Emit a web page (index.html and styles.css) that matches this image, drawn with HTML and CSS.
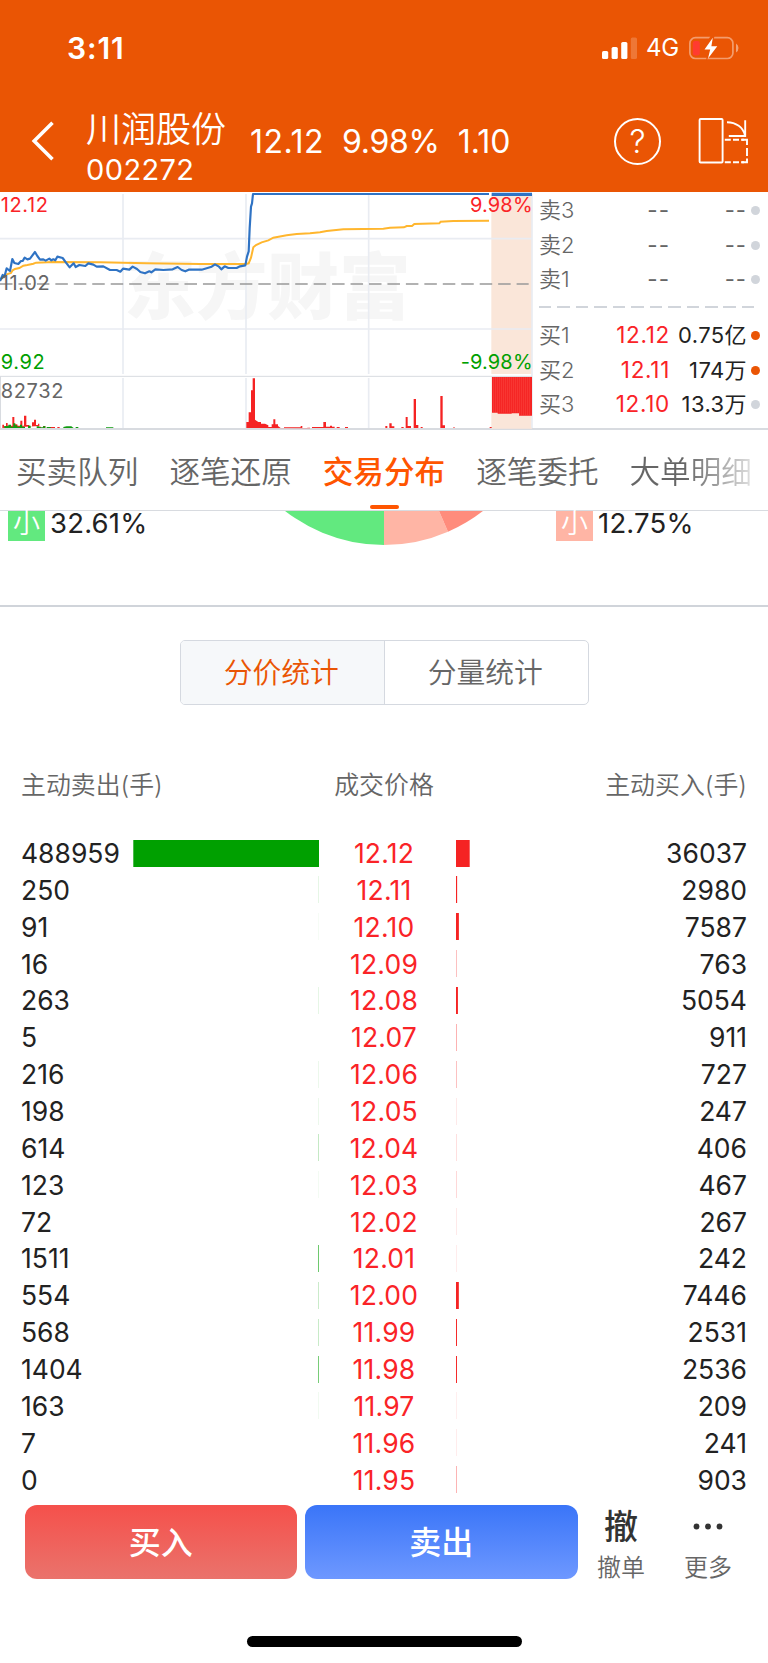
FILE: index.html
```html
<!DOCTYPE html>
<html lang="zh-CN">
<head>
<meta charset="utf-8">
<title>川润股份 002272</title>
<link rel="stylesheet" href="styles.css">
</head>
<body>
<div class="app">
  <header class="header">
    <div class="status">
      <span class="time">3:11</span>
      <svg class="signal" width="36" height="24" viewBox="0 0 36 24" fill="#fff"><rect x="0" y="15" width="6.2" height="8" rx="1.6"/><rect x="9.6" y="11" width="6.2" height="12" rx="1.6"/><rect x="19.2" y="6" width="6.2" height="17" rx="1.6"/><rect x="28.8" y="1.500" width="6.2" height="21.500" rx="1.600" opacity=".2"/></svg>
      <span class="net">4G</span>
      <svg class="battery" width="51" height="26" viewBox="0 0 51 26"><rect x="1.900" y="2.700" width="43" height="20.800" rx="5.500" fill="none" stroke="#fff" stroke-opacity=".42" stroke-width="1.700"/><path d="M48 8.500q2.500 1.500 2.500 4.500t-2.500 4.500z" fill="#fff" fill-opacity=".45"/><rect x="4.800" y="6" width="7" height="14.500" rx="2.200" fill="#ff3b30"/><path d="M22.500 1L14.500 15H20L18 25.500L30 11H24L26.500 1z" fill="#ea5504"/><path d="M24.800 2.800L16.500 14.500H22.200L20 23.600L29.300 11.300H23.400z" fill="#fff"/></svg>
    </div>
    <div class="nav">
      <svg class="back" width="24" height="42" viewBox="0 0 24 42" fill="none" stroke="#fff" stroke-width="3.600"><path d="M21.500 2.800L3.200 21L21.500 39.200"/></svg>
      <div class="stock"><div class="name">川润股份</div><div class="code">002272</div></div>
      <div class="quote"><span>12.12</span><span>9.98%</span><span>1.10</span></div>
      <div class="help">?</div>
      <svg class="rotate" width="52" height="48" viewBox="0 0 52 48" fill="none" stroke="#fff" stroke-width="1.900"><rect x="1.600" y="2" width="23" height="43.500" rx="1"/><path d="M26.800 22.800H46M26.800 45.200H46" stroke-dasharray="6 2.200"/><path d="M43.500 22.800H49V28M49 31v8M49 41.500V45.200H43.500"/><path d="M29 5.200C38 5.200 45.300 10.500 47 18.500M47.200 3.200V19H30.800"/></svg>
    </div>
  </header>

  <section class="market">
    <svg class="chart" width="534" height="237" viewBox="0 21 1602 711">
      <g class="watermark"><text x="372" y="384">东方财富</text></g>
      <path class="auction" d="M1474 27h122v540h-122zM1474 575h122v156h-122z"/>
      <path class="grid" d="M0 161H1596M0 432H1596M369 27V567M738 27V567M1106 27V567M369 579V729M738 579V729M1106 579V729M1596 27V729"/>
      <path class="frame" d="M0 574H1596M1.500 574V729"/>
      <path class="base" d="M0 297H1586"/>
      <path class="avg" d="M0 286L9 276L20 268L33 264L38 256L45 252L58 249L70 242L82 240L100 236L108 233L160 231L300 232L440 235L600 237H738L746 235L753 218L760 187L768 180L785 172L805 166L820 158L860 151L890 147L930 145L960 142L980 138L1030 133L1150 131L1170 128L1212 127L1220 123L1236 123L1243 117L1318 115L1322 110L1360 108L1467 107"/>
      <path class="price" d="M0 288L8 270L13 276L20 250L30 258L37 222L43 234L55 237L63 228L68 228L74 218L82 223L90 221L105 201L112 213L120 224L130 223L137 227L148 221L154 226L160 223L166 226L172 215L188 219L198 233L209 247L221 235L227 246L238 240L256 243L265 235L280 239L290 245L310 244L330 255L350 255L361 260L369 251L388 254L398 245L411 252L421 261L435 265L448 259L454 262L466 253L490 255L518 253L533 246L545 255L556 259L566 254L605 254L625 248L635 245L645 238L657 245L664 253L674 244L685 249L710 249L720 244L736 241L741 215L746 199L749 130L753 65L756 55L759 27H1467"/>
      <path class="price thick" d="M1475 28H1596"/>
      <path class="up" d="M7 729v-10h5v5h6v-10h5v8h14v-26h6v22h9v4h9v-15h6v15h5v-30h7v28h9v4h8v-12h6v-8h6v16h6v-4h4v7zM117 729v-4h6v4zM129 729v-6h7v6zM146 729v-3h19v3zM172 729v-3h7v3z"/>
      <path class="down" d="M13 729v-6h12v-4h8v6h7v-10h6v6h6v4h8v-6h6v6h9v4zM84 729v-7h8v7zM110 729v-5h8v3h12v-4h6v6zM140 729v-3h12v3zM190 729v-3l10-2h14l7 5zM227 729v-3h8v3zM318 729v-2h22v2z"/>
      <path class="up" d="M739 729v-18h7v-29h7v-66h5v-36h7v124l10 7h8v5h12l10 5v5h10v-8h5v-15h6v15h8v5l8 6h10v-2h50v-4h5v6h15v-1h8v2zM936 729v-3h34v-15h8v14h12v-3h6v3h8v4zM1010 729v-3h9v3zM1035 729v-3h9v3zM1156 729v-6h6v6zM1168 729v-14h7v9h8v5zM1204 729v-3h7v3zM1217 729v-33h6v27h10v6zM1241 729v-87h7v78h7v9zM1262 729v-3h6v3zM1321 729v-96h7v88h7v8zM1360 729v-2h4v2zM1469 729v-3h6v3z"/>
      <path class="up" d="M1476 576h120v116h-39v-7h-22v1h-42v-3h-17z"/>
      <path class="stripes" d="M1481 576v107m6-107v107m6-107v107m6-107v107m6-107v107m6-107v107m6-107v107m6-107v107m6-107v107m6-107v107m6-107v107m6-107v107m6-107v107m6-107v115m6-115v115m6-115v115m6-115v115m6-115v115m6-115v115"/>
      <g class="labels">
        <text x="2" y="80" fill="#fa2327">12.12</text>
        <text x="2" y="315" fill="#666">11.02</text>
        <text x="2" y="551" fill="#00a000">9.92</text>
        <text x="2" y="639" fill="#666">82732</text>
        <text class="tight" x="1598" y="80" fill="#fa2327" text-anchor="end">9.98%</text>
        <text class="tight" x="1598" y="551" fill="#00a000" text-anchor="end">-9.98%</text>
      </g>
    </svg>
    <div class="book">
      <div class="level"><span>卖3</span><b class="none">--</b><i class="none">--</i><em></em></div>
      <div class="level"><span>卖2</span><b class="none">--</b><i class="none">--</i><em></em></div>
      <div class="level"><span>卖1</span><b class="none">--</b><i class="none">--</i><em></em></div>
      <div class="divider"></div>
      <div class="level"><span>买1</span><b>12.12</b><i>0.75亿</i><em class="hot"></em></div>
      <div class="level"><span>买2</span><b>12.11</b><i>174万</i><em class="hot"></em></div>
      <div class="level"><span>买3</span><b>12.10</b><i>13.3万</i><em></em></div>
    </div>
  </section>

  <nav class="tabs">
    <a>买卖队列</a><a>逐笔还原</a><a class="active">交易分布</a><a>逐笔委托</a><a>大单明细</a>
  </nav>

  <section class="share">
    <div class="legend sell-legend"><span>小</span>32.61%</div>
    <svg class="pie" width="324" height="36" viewBox="222 511 324 36"><path d="M384 384V545A161 161 0 0 1 223 384z" fill="#62e97f"/><path d="M384 384V545A161 161 0 0 0 448 531.700z" fill="#ffb5a5"/><path d="M384 384L448 531.700A161 161 0 0 0 545 384z" fill="#ff8c7c"/></svg>
    <div class="legend buy-legend"><span>小</span>12.75%</div>
  </section>

  <div class="segment"><a class="on">分价统计</a><a>分量统计</a></div>

  <section class="table">
    <div class="head"><span>主动卖出(手)</span><span>成交价格</span><span>主动买入(手)</span></div>
    <div class="row"><span>488959</span><svg class="bar s"><rect x="0.3" width="185.7"/></svg><b>12.12</b><svg class="bar b"><rect width="13.69"/></svg><span>36037</span></div>
    <div class="row"><span>250</span><svg class="bar s"><rect x="185.9" width=".1"/></svg><b>12.11</b><svg class="bar b"><rect width="1.13"/></svg><span>2980</span></div>
    <div class="row"><span>91</span><svg class="bar s"><rect x="185.96" width=".04"/></svg><b>12.10</b><svg class="bar b"><rect width="2.88"/></svg><span>7587</span></div>
    <div class="row"><span>16</span><svg class="bar s"></svg><b>12.09</b><svg class="bar b"><rect width=".29"/></svg><span>763</span></div>
    <div class="row"><span>263</span><svg class="bar s"><rect x="185.9" width=".1"/></svg><b>12.08</b><svg class="bar b"><rect width="1.92"/></svg><span>5054</span></div>
    <div class="row"><span>5</span><svg class="bar s"></svg><b>12.07</b><svg class="bar b"><rect width=".35"/></svg><span>911</span></div>
    <div class="row"><span>216</span><svg class="bar s"><rect x="185.92" width=".08"/></svg><b>12.06</b><svg class="bar b"><rect width=".28"/></svg><span>727</span></div>
    <div class="row"><span>198</span><svg class="bar s"><rect x="185.92" width=".08"/></svg><b>12.05</b><svg class="bar b"><rect width=".1"/></svg><span>247</span></div>
    <div class="row"><span>614</span><svg class="bar s"><rect x="185.77" width=".23"/></svg><b>12.04</b><svg class="bar b"><rect width=".15"/></svg><span>406</span></div>
    <div class="row"><span>123</span><svg class="bar s"><rect x="185.95" width=".05"/></svg><b>12.03</b><svg class="bar b"><rect width=".18"/></svg><span>467</span></div>
    <div class="row"><span>72</span><svg class="bar s"></svg><b>12.02</b><svg class="bar b"><rect width=".1"/></svg><span>267</span></div>
    <div class="row"><span>1511</span><svg class="bar s"><rect x="185.43" width=".57"/></svg><b>12.01</b><svg class="bar b"><rect width=".09"/></svg><span>242</span></div>
    <div class="row"><span>554</span><svg class="bar s"><rect x="185.79" width=".21"/></svg><b>12.00</b><svg class="bar b"><rect width="2.83"/></svg><span>7446</span></div>
    <div class="row"><span>568</span><svg class="bar s"><rect x="185.78" width=".22"/></svg><b>11.99</b><svg class="bar b"><rect width=".96"/></svg><span>2531</span></div>
    <div class="row"><span>1404</span><svg class="bar s"><rect x="185.47" width=".53"/></svg><b>11.98</b><svg class="bar b"><rect width=".96"/></svg><span>2536</span></div>
    <div class="row"><span>163</span><svg class="bar s"><rect x="185.94" width=".06"/></svg><b>11.97</b><svg class="bar b"><rect width=".08"/></svg><span>209</span></div>
    <div class="row"><span>7</span><svg class="bar s"></svg><b>11.96</b><svg class="bar b"><rect width=".09"/></svg><span>241</span></div>
    <div class="row"><span>0</span><svg class="bar s"></svg><b>11.95</b><svg class="bar b"><rect width=".34"/></svg><span>903</span></div>
  </section>

  <footer class="actions">
    <a class="btn buy">买入</a><a class="btn sell">卖出</a>
    <a class="tool"><strong>撤</strong><span>撤单</span></a>
    <a class="tool"><svg width="34" height="37" viewBox="0 0 34 37" fill="#333"><circle cx="5.500" cy="18.500" r="2.900"/><circle cx="17" cy="18.500" r="2.900"/><circle cx="28.500" cy="18.500" r="2.900"/></svg><span>更多</span></a>
  </footer>
  <div class="home"></div>
</div>
</body>
</html>
```
FILE: styles.css
```css
* { box-sizing: border-box; }
body { margin: 0; background: #fff; font-family: Inter, "Noto Sans CJK SC", sans-serif; color: #222; }
svg { display: block; flex: none; }
.app { width: 768px; height: 1663px; overflow: hidden; display: flex; flex-direction: column; }
.header { height: 192px; background: #ea5504; color: #fff; flex: none; }
.status { height: 95px; display: flex; align-items: center; padding-left: 67px; }
.time { font-size: 30px; font-weight: 600; width: 535px; letter-spacing: .9px; }
.signal { margin-right: 8px; }
.net { font-size: 24px; font-weight: 400; width: 42px; letter-spacing: -.2px; }
.nav { height: 97px; display: flex; align-items: center; padding: 0 18px 5px 31px; }
.stock { width: 164px; margin-left: 31px; padding-top: 14px; }
.name { font-size: 35px; line-height: 44px; white-space: nowrap; font-weight: 350; }
.code { font-size: 29px; line-height: 38px; letter-spacing: .4px; }
.quote { display: flex; gap: 18px; font-size: 32px; white-space: nowrap; width: 366px; margin-left: 1px; }
.quote span:first-child { letter-spacing: .5px; }
.quote span:nth-child(2) { letter-spacing: -.3px; }
.help { width: 47px; height: 47px; border: 2px solid #fff; border-radius: 50%; font-size: 32px; line-height: 43px; text-align: center; font-weight: 300; flex: none; }
.rotate { margin-left: 37px; }

.market { display: flex; height: 238px; border-bottom: 2px solid #d8dbe0; flex: none; }
.watermark { font-size: 215px; font-weight: 900; fill: #f6f6f6; }
.auction { fill: #fae6d9; }
.grid { stroke: #e9ecf2; stroke-width: 5; fill: none; }
.frame { stroke: #d8dbe0; stroke-width: 3; fill: none; }
.base { stroke: #999; stroke-width: 5; stroke-dasharray: 37.500 17.850; }
.avg { stroke: #ffb62e; stroke-width: 6; fill: none; }
.price { stroke: #2f73c4; stroke-width: 6.500; fill: none; stroke-linejoin: round; }
.price.thick { stroke-width: 10; }
.up { fill: #f52323; }
.down { fill: #0f9b0f; }
.stripes { stroke: #ff6a5c; stroke-width: 1; }
.labels { font-size: 60px; letter-spacing: 2px; }
.labels .tight { letter-spacing: .4px; }
.book { flex: 1; padding: 1px 8px 0 5px; font-size: 22px; }
.level { display: grid; grid-template-columns: 48px 83px 77px 13px; height: 34.700px; line-height: 34.700px; align-items: center; white-space: nowrap; }
.level span { color: #666; font-weight: 350; }
.level b { font-weight: 400; color: #fa2327; text-align: right; letter-spacing: .7px; font-size: 22.500px; }
.level i { font-style: normal; text-align: right; letter-spacing: .4px; }
.level .none { color: #666; letter-spacing: 1px; }
.level em { width: 9px; height: 9px; border-radius: 50%; background: #d1d5db; justify-self: end; }
.level .hot { background: #ea5504; }
.divider { height: 2px; margin: 9px 0 10px; width: 216px; background: repeating-linear-gradient(90deg, #d1d5db 0 12.500px, transparent 12.500px 18.450px); }

.tabs { height: 81px; border-bottom: 1px solid #d8dbe0; display: flex; gap: 31px; padding: 1px 0 0 16px; font-size: 30.600px; line-height: 82px; font-weight: 350; color: #666; white-space: nowrap; flex: none; }
.tabs a { flex: none; }
.tabs .active { color: #ff5500; font-weight: 500; position: relative; }
.tabs .active::after { content: ""; position: absolute; left: 47px; bottom: 1px; width: 29px; height: 4px; border-radius: 2px; background: #ff5500; }
.tabs a:last-child { background: linear-gradient(90deg, #666 45%, #e0e0e0); -webkit-background-clip: text; background-clip: text; color: transparent; }

.share { height: 96px; border-bottom: 2px solid #d0d4da; display: flex; padding-left: 8px; flex: none; }
.legend { display: flex; gap: 5px; font-size: 27.500px; line-height: 25px; height: 30px; width: 214px; flex: none; letter-spacing: .2px; }
.legend span { width: 37px; height: 30px; background: #62e97f; color: #fff; font-size: 27px; line-height: 26px; font-weight: 350; text-align: center; }
.buy-legend { padding-left: 10px; width: 222px; }
.buy-legend span { background: #ffb5a5; }

.segment { width: 409px; height: 65px; margin: 33px 0 0 180px; border: 1px solid #d5d9e0; border-radius: 5px; display: grid; grid-template-columns: 1fr 1fr; font-size: 28.800px; line-height: 62px; text-align: center; color: #666; flex: none; font-weight: 350; }
.segment a { height: 63px; padding: 1px 2px 0 0; }
.segment .on { background: #f6f8fa; color: #ea5504; border-right: 1px solid #d5d9e0; border-radius: 4px 0 0 4px; }

.table { height: 800px; padding-top: 61px; flex: none; }
.head { display: grid; grid-template-columns: 1fr 120px 1fr; padding: 0 21px; height: 38px; line-height: 39px; font-size: 24.900px; color: #666; font-weight: 350; margin-bottom: 30.600px; text-align: center; }
.head span:first-child { text-align: left; }
.head span:last-child { text-align: right; }
.row { display: grid; grid-template-columns: 112px 186px 130px 60px 1fr; padding: 0 21px; height: 36.870px; align-items: center; font-size: 26.500px; line-height: 32px; }
.row b { font-weight: 400; color: #fa2327; text-align: center; letter-spacing: .2px; }
.row b + svg + span { text-align: right; }
.bar { height: 27px; width: 100%; }
.bar rect { height: 27px; }
.bar.s { fill: #00a000; }
.bar.b { fill: #f52323; margin-left: 7px; }

.actions { display: flex; padding-left: 24.500px; height: 74px; flex: none; }
.btn { width: 272.500px; height: 74px; border-radius: 12px; margin-right: 8px; color: #fff; font-size: 32px; line-height: 75px; text-align: center; font-weight: 500; flex: none; }
.buy { background: linear-gradient(#f5504b, #ea736c); }
.sell { background: linear-gradient(#3a75f8, #6e98ff); margin-right: 0; }
.tool { width: 87px; display: flex; flex-direction: column; align-items: center; font-size: 24px; color: #666; font-weight: 350; flex: none; }
.tool strong { font-size: 34px; line-height: 43px; height: 42px; font-weight: 500; color: #333; }
.tool svg { margin: 3px 0 2px; }
.tool span { line-height: 42px; }
.home { width: 275px; height: 11px; border-radius: 6px; background: #000; margin: 57px 0 0 247px; flex: none; }
```
